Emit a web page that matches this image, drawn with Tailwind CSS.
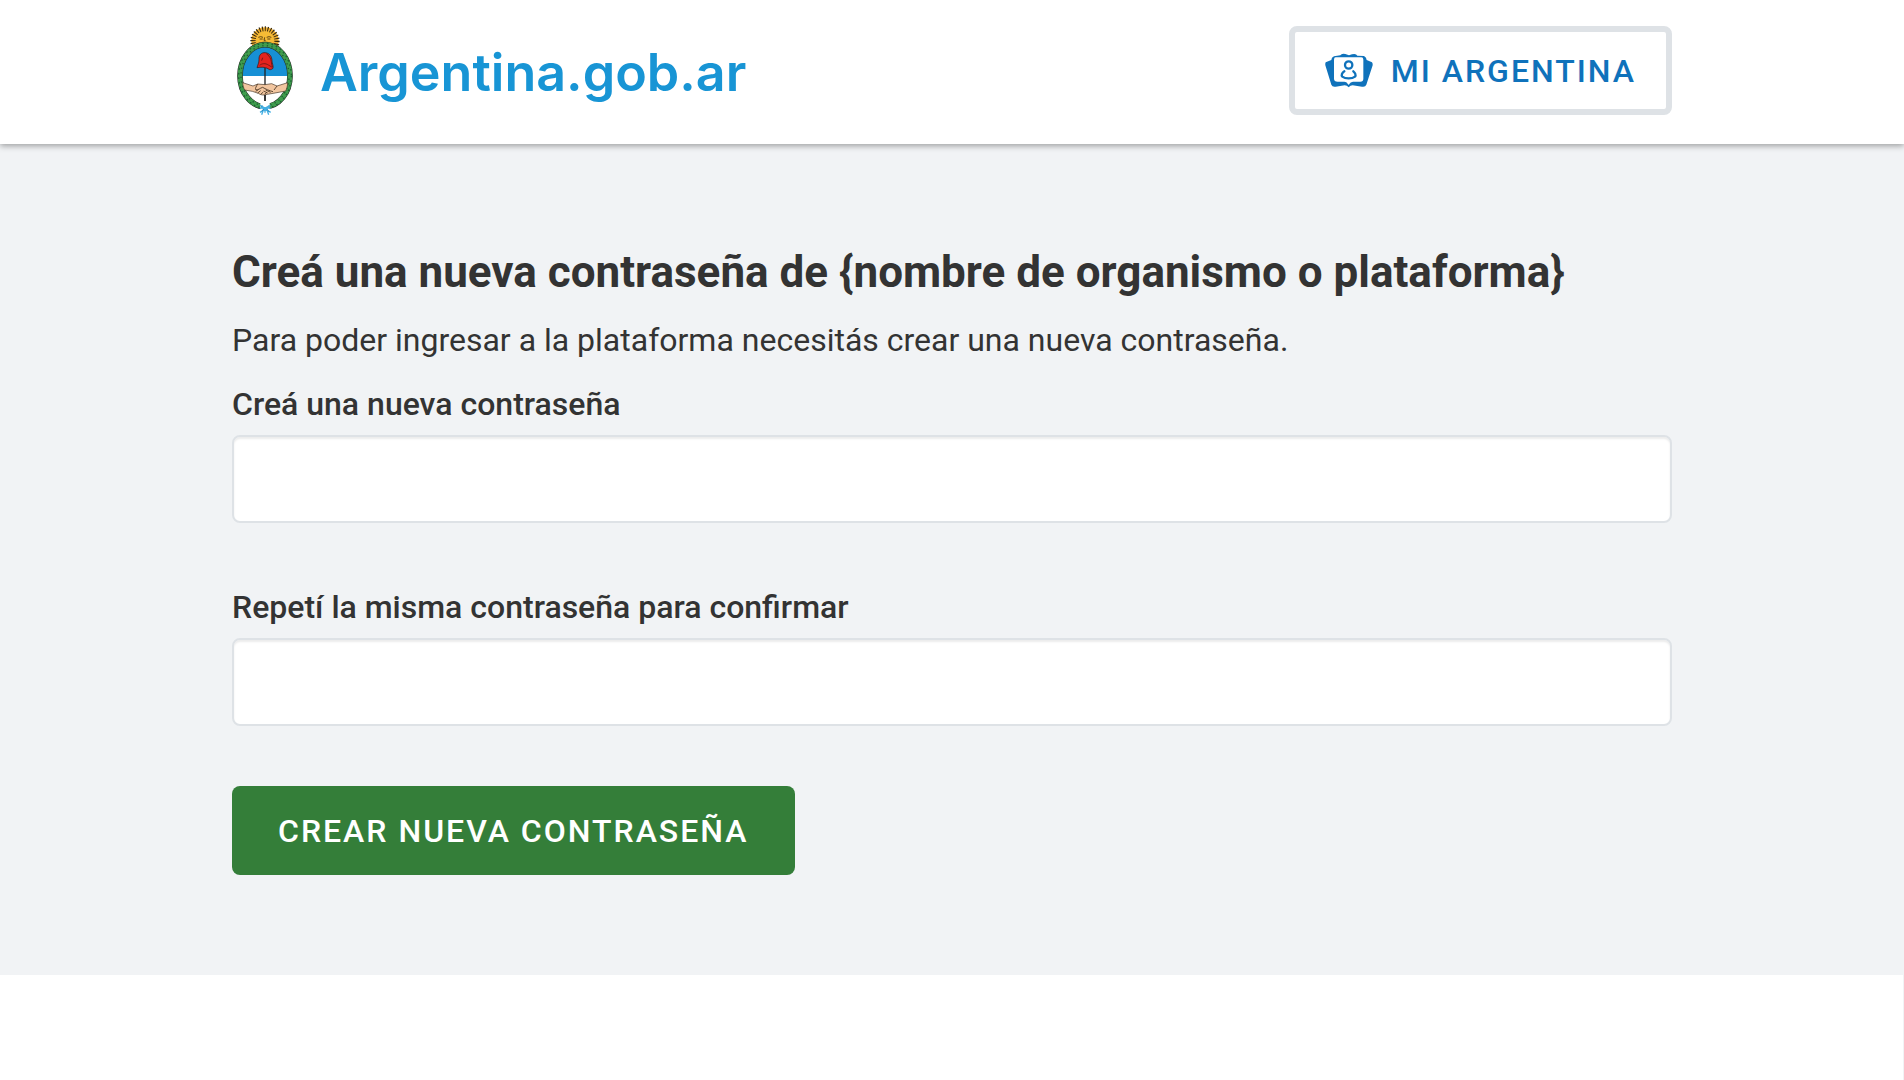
<!DOCTYPE html>
<html lang="es">
<head>
<meta charset="utf-8">
<meta name="viewport" content="width=device-width, initial-scale=1">
<title>Creá una nueva contraseña</title>
<script src="https://cdn.jsdelivr.net/npm/@tailwindcss/browser@4"></script>
</head>
<body class="min-h-screen bg-white font-['Roboto',sans-serif] text-[32px] leading-12 text-[#333333] shadow-[inset_-1px_0_0_#f1f3f5]">
<header class="relative bg-white shadow-[0_2px_6px_rgba(0,0,0,0.35)]">
  <div class="mx-auto flex h-36 max-w-[1440px] items-start justify-between pt-[26px]">
    <a href="#" class="flex items-center gap-[26px] pl-1 text-[#1895d5]">
      <svg class="h-[89px] w-[58px]" viewBox="33 33 174 267" aria-hidden="true">
        <circle cx="120" cy="78" r="30" fill="#f0b030"/>
        <circle cx="120" cy="78" r="35" fill="none" stroke="#f0b030" stroke-width="12"/>
        <circle cx="120" cy="78" r="36" fill="none" stroke="#33270f" stroke-width="16" stroke-dasharray="3 5"/>
        <ellipse cx="120" cy="73" rx="27" ry="24" fill="#f6bb35"/>
        <path d="M100 67q7-4 14 0M125 67q7-4 14 0M104 72h9M127 72h9M119 67l-2 9h5M112 82h16" fill="none" stroke="#5d4313" stroke-width="3"/>
        <ellipse cx="120" cy="182" rx="74" ry="94" fill="#fff"/>
        <path d="M46 183a74 94 0 0 1 148 0z" fill="#1790d5"/>
        <ellipse cx="120" cy="182" rx="75" ry="93" fill="none" stroke="#222" stroke-width="17"/>
        <ellipse cx="120" cy="182" rx="75" ry="93" fill="none" stroke="#3f9c4d" stroke-width="14"/>
        <ellipse cx="120" cy="182" rx="79" ry="97" fill="none" stroke="#1c6331" stroke-width="4" stroke-dasharray="5 9"/>
        <ellipse cx="120" cy="182" rx="72" ry="90" fill="none" stroke="#1f5b32" stroke-width="4" stroke-dasharray="4 10" stroke-dashoffset="5"/>
        <path d="M106 264h28v24h-28z" fill="#fff"/>
        <path d="M120 158v100" stroke="#222" stroke-width="4"/>
        <path d="M96 158C98 150 102 144 102 134C101 120 109 112 121 113C133 114 141 124 141 138C141 146 146 152 144 160C140 164 133 166 129 161C120 156 108 156 96 158Z" fill="#e3231f" stroke="#331312" stroke-width="2"/>
        <path d="M124 116c8 5 14 15 15 24q0 10 4 16M104 151c7-6 17-7 26-1l12 7M113 128l-3 9" fill="none" stroke="#7c1815" stroke-width="3"/>
        <path d="M53 203l31 10 14-6 22 2 20-3 16 7 32-10c0 9-3 19-6 25l-32 6-23 4c-10 4-21 2-27-3l-18-6-23-4c-3-6-6-15-6-22z" fill="#f2c6a0" stroke="#43311f" stroke-width="2"/>
        <path d="M98 207c-4 7-8 13-6 17 7 3 13-5 21-7 8 5 20 10 31 13M92 229l8-5M98 234l9-7M107 238l8-7M119 237l7-5M128 234l-12-6M137 232l-15-7M156 213l-9 12" fill="none" stroke="#43311f" stroke-width="2.5"/>
        <path d="M120 240v18" stroke="#222" stroke-width="4"/>
        <path d="M105 271c8 1 11 8 15 9 4-1 8-8 16-9M104 280l15-2 18 2M107 276l12 7-14 9M134 276l-12 7 15 9M116 282l-6 17M125 282l6 17M120 279v14" fill="none" stroke="#43afe3" stroke-width="4"/>
        <path d="M108 275l5-3M130 273l5 4M111 289l5-7M126 282l6 8" fill="none" stroke="#1c6fa6" stroke-width="2"/>
      </svg>
      <span class="pt-1 font-['Inter',sans-serif] text-[52px] leading-16 font-semibold">Argentina.gob.ar</span>
    </a>
    <a href="#" class="flex h-[89px] items-center gap-[18px] rounded-lg border-6 border-[#dee2e6] px-[30px] font-medium tracking-[2px] text-[#0f72bb]">
      <svg class="h-[35px] w-12" viewBox="45 37 144 105" aria-hidden="true">
        <path d="M72 47Q64 50 64 58L47 65Q45 69 46 74L64 132Q67 140 77 138L104 134Q111 134 116 140Q121 134 128 134L156 138Q166 140 169 132L188 74Q189 69 186 65L170 58Q170 50 162 46L142 45Q138 37 126 41L117 44L106 40Q95 37 91 44Z" fill="#0f72bb"/>
        <path d="M77 50H154Q160 50 160 57V114Q160 123 151 123H129Q121 124 118 130Q116 135 113 129Q110 123 103 123H83Q72 123 72 114V57Q72 50 77 50Z" fill="#fff"/>
        <circle cx="116" cy="73" r="11" fill="none" stroke="#0f72bb" stroke-width="7"/>
        <path d="M103 92C96 96 93 104 97 108C106 115 126 115 135 108C139 103 135 96 130 92" fill="none" stroke="#0f72bb" stroke-width="7" stroke-linecap="round"/>
      </svg>
      <span>MI ARGENTINA</span>
    </a>
  </div>
</header>
<main class="bg-[#f1f3f5] pt-24 pb-[100px]">
  <form class="mx-auto flex max-w-[1440px] flex-col items-start">
    <h1 class="text-[44px] leading-16 font-bold">Creá una nueva contraseña de {nombre de organismo o plataforma}</h1>
    <p class="mt-3">Para poder ingresar a la plataforma necesitás crear una nueva contraseña.</p>
    <label for="nueva" class="mt-4 font-medium">Creá una nueva contraseña</label>
    <input id="nueva" type="password" class="mt-[7px] h-[88px] w-full rounded-lg border-2 border-[#dee2e6] bg-white px-6 shadow-[inset_0_2px_2px_rgba(0,0,0,0.08)]">
    <label for="repetir" class="mt-[60px] font-medium">Repetí la misma contraseña para confirmar</label>
    <input id="repetir" type="password" class="mt-[7px] h-[88px] w-full rounded-lg border-2 border-[#dee2e6] bg-white px-6 shadow-[inset_0_2px_2px_rgba(0,0,0,0.08)]">
    <button type="submit" class="mt-[60px] h-[89px] rounded-lg bg-[#347e39] px-[46px] font-medium tracking-[2px] text-white">CREAR NUEVA CONTRASEÑA</button>
  </form>
</main>
</body>
</html>
